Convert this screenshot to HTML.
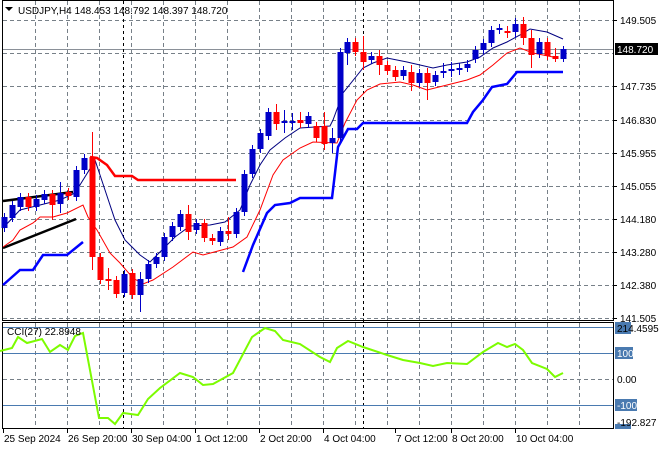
<!DOCTYPE html>
<html><head><meta charset="utf-8"><style>
html,body{margin:0;padding:0;background:#fff;width:660px;height:450px;overflow:hidden}
svg{display:block}
text{font-family:"Liberation Sans",sans-serif;font-size:10px;fill:#000}
</style></head><body>
<svg id="s" width="660" height="450" xmlns="http://www.w3.org/2000/svg">
<rect width="660" height="450" fill="#fff"/>
<g id="grid" stroke="#778088" stroke-width="1" stroke-dasharray="4,3"></g>
<rect x="2.5" y="0.5" width="611" height="320" fill="none" stroke="#000"/>
<rect x="2.5" y="322.5" width="611" height="106" fill="none" stroke="#000"/>
<line x1="3" y1="49.5" x2="613" y2="49.5" stroke="#8a9098"/>
<line x1="123.5" y1="1" x2="123.5" y2="428" stroke="#000" stroke-dasharray="3,3"/>
<line x1="363.5" y1="1" x2="363.5" y2="428" stroke="#000" stroke-dasharray="3,3"/>
<line x1="3" y1="327.5" x2="613" y2="327.5" stroke="#4a7ab0"/>
<line x1="3" y1="353.5" x2="613" y2="353.5" stroke="#4a7ab0"/>
<line x1="3" y1="405.5" x2="613" y2="405.5" stroke="#4a7ab0"/>
<g id="lines" fill="none"></g>
<g id="candles"></g>
<polyline fill="none" stroke="#7cfc00" stroke-width="2" points="0,351 12,348 18,337 27,343 42,339 50,352 60,345 68,350 75,336 83,333 99,418 108,418 115,424 123,413 138,415 148,399 160,388 180,373 193,377 203,385 213,384 233,373 252,337 265,328 275,331 283,340 300,344 320,357 330,362 337,348 348,341 363,347 387,355 403,360 420,363 433,366 447,363 467,364 483,352 498,343 507,347 515,344 523,350 532,363 547,369 555,377 563,373"/>
<path d="M5,7 h8 l-4,4 z" fill="#000"/>
<text x="18" y="14">USDJPY,H4  148.453 148.792 148.397 148.720</text>
<text x="7" y="335">CCI(27) 22.8948</text>
<g id="axis"></g>
<rect x="615" y="43" width="43" height="12" fill="#000"/>
<text x="617" y="53" style="fill:#fff">148.720</text>
<rect x="615" y="322" width="16" height="12" fill="#4a7ab0"/>
<text x="617" y="332">214.4595</text>
<rect x="615" y="347" width="18" height="12" fill="#4a7ab0"/>
<text x="617" y="357" style="fill:#fff">100</text>
<text x="617" y="383">0.00</text>
<rect x="615" y="399" width="22" height="12" fill="#4a7ab0"/>
<text x="617" y="409" style="fill:#fff">-100</text>
<rect x="615" y="424" width="16" height="5" fill="#4a7ab0"/>
<text x="617" y="426">-192.827</text>
</svg>
<script>
const NS="http://www.w3.org/2000/svg";
function el(p,t,a){const e=document.createElementNS(NS,t);for(const k in a)e.setAttribute(k,a[k]);p.appendChild(e);return e;}
const g=document.getElementById('grid');
const vx=[35,67,99,131,163,195,227,259,291,323,355,387,419,451,483,515,547,579];
vx.forEach(x=>{el(g,'line',{x1:x+.5,y1:1,x2:x+.5,y2:320});el(g,'line',{x1:x+.5,y1:323,x2:x+.5,y2:428});});
const hy=[20,53,86,120,153,186,219,252,285,318];
hy.forEach(y=>el(g,'line',{x1:3,y1:y+.5,x2:613,y2:y+.5}));
el(g,'line',{x1:3,y1:379.5,x2:613,y2:379.5});
const ax=document.getElementById('axis');
const pl=["149.505","","147.735","146.830","145.955","145.055","144.180","143.280","142.380","141.505"];
hy.forEach((y,i)=>{if(pl[i]){el(ax,'line',{x1:613,y1:y+.5,x2:617,y2:y+.5,stroke:'#000'});const t=el(ax,'text',{x:620,y:y+4});t.textContent=pl[i];}});
const tl=[[2,"25 Sep 2024"],[66,"26 Sep 20:00"],[130,"30 Sep 04:00"],[194,"1 Oct 12:00"],[258,"2 Oct 20:00"],[322,"4 Oct 04:00"],[394,"7 Oct 12:00"],[450,"8 Oct 20:00"],[514,"10 Oct 04:00"]];
tl.forEach(([x,s])=>{el(ax,'line',{x1:x+1.5,y1:428,x2:x+1.5,y2:433,stroke:'#000'});const t=el(ax,'text',{x:x+2,y:442});t.textContent=s;});
const L=document.getElementById('lines');
function pline(pts,c,w){el(L,'polyline',{points:pts,stroke:c,'stroke-width':w});}
pline("3,285 20,270 33,270 43,255 67,255 83,242","#0000ff",2.5);
pline("243,272 253,245 267,213 275,205 290,203 300,198 332,198 335,173 338,147 348,129 357,129 363,123 467,123 473,112 483,100 492,87 507,84 517,72 563,72","#0000ff",2.5);
pline("90,157 97,158 107,165 115,176 132,176 138,180 236,180","#ff0000",2.5);
pline("3,201 73,192","#000",2.5);
pline("3,248 76,219","#000",2.5);
pline("3,228 20,210 40,205 60,200 75,193 88,172 95,160 105,190 115,220 125,240 140,255 150,262 160,252 175,237 190,226 210,225 225,222 240,210 250,185 260,165 270,150 285,138 300,128 330,126 333,120 343,93 363,68 373,63 387,58 407,62 433,68 447,65 467,62 480,57 493,48 507,42 520,35 530,29 547,32 563,39","#000080",1);
pline("3,247 13,240 20,230 33,223 40,217 53,217 67,213 83,205 88,217 97,230 110,253 120,263 133,278 143,284 153,280 173,267 193,252 203,255 233,247 247,237 260,210 273,175 283,160 300,148 313,142 337,143 345,123 357,100 367,90 380,84 400,82 413,85 427,90 447,85 467,80 480,75 493,65 507,53 520,48 533,53 553,57","#ff0000",1);
const C=[[4,'b',217,228],[12,'b',205,218],[20,'b',197,207],[28,'r',197,207],[36,'b',199,207],[44,'b',194,200],[52,'r',194,205,190,220],[60,'b',193,204,182,213],[68,'r',192,196],[76,'b',170,197],[84,'b',158,170],[92,'r',157,257,132,270],[100,'r',257,280],[108,'r',279,281,268,290],[116,'r',280,294],[124,'b',274,293],[132,'r',273,295],[140,'b',279,295,272,312],[148,'b',264,279],[156,'b',257,264],[164,'b',237,257],[172,'b',226,237],[180,'b',214,227],[188,'r',214,232,205,240],[196,'b',223,230],[204,'r',223,238],[212,'r',238,241],[220,'b',231,242],[228,'r',231,234,217,240],[236,'b',212,234],[244,'b',174,212],[252,'b',149,174],[260,'b',133,149],[268,'b',112,136],[276,'r',112,124,104,130],[284,'b',121,123,110,133],[292,'b',121,123,113,130],[300,'r',120,123,112,128],[308,'b',116,124],[316,'r',126,138],[324,'r',126,144,112,150],[332,'b',138,143,128,153],[340,'b',52,138],[347,'b',42,53,38,65],[355,'r',42,52],[363,'r',52,62,36,70],[371,'b',56,60],[379,'r',56,65,50,75],[387,'r',65,71],[395,'r',70,77],[403,'b',70,76],[411,'r',72,83,65,91],[419,'b',73,83],[427,'r',73,83,68,100],[435,'b',75,82],[443,'b',71,73,63,78],[451,'b',69,71,62,77],[459,'b',68,70,63,75],[467,'b',64,68],[475,'b',50,59],[483,'b',43,50],[491,'b',30,43],[499,'b',28,30,24,34],[507,'r',31,32,26,38],[515,'b',24,32,18,38],[523,'r',24,38,17,45],[531,'r',38,55,30,68],[539,'b',42,54],[547,'r',42,56],[555,'r',56,59,48,62],[563,'b',49,59,46,62]];
const cg=document.getElementById('candles');
C.forEach(c=>{const [x,k,o,cl,h,l]=c;const col=k=='b'?'#0000c8':'#ff0000';const hi=h||o-4,lo=l||cl+4;
el(cg,'line',{x1:x+.5,y1:hi,x2:x+.5,y2:lo,stroke:col});
el(cg,'rect',{x:x-2.5,y:o,width:6,height:Math.max(2,cl-o),fill:col});});
</script>
</body></html>
